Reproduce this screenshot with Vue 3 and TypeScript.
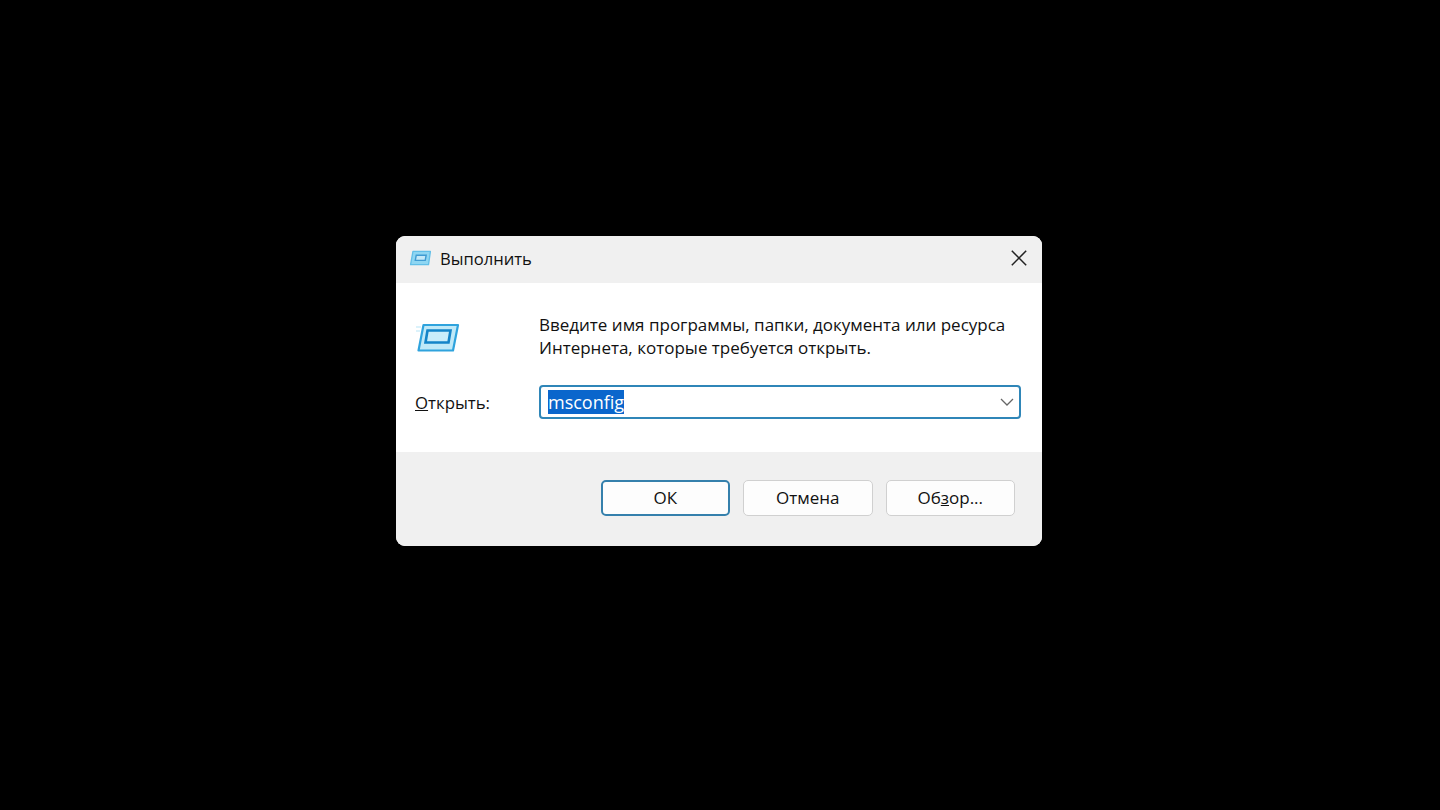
<script setup lang="ts">
const title: string = 'Выполнить'
</script>

<template>
  <div class="page">
    <div class="dialog">
      <header class="titlebar">
        <svg class="icon-small" viewBox="0 0 24 18" width="23" height="17">
          <path d="M4 1.5H22.5L20.5 15.5H1.5Z" fill="#8ed6f2" stroke="#62bfe8" stroke-width="1.4" stroke-linejoin="round" />
          <path d="M7.5 5.5H18L17 11H6.5Z" fill="#c4e9f8" stroke="#3f9bd2" stroke-width="1.5" />
        </svg>
        <span class="title">{{ title }}</span>
        <svg class="close" viewBox="0 0 16 16" width="16" height="16">
          <path d="M.8.8 15.2 15.2M15.2.8.8 15.2" stroke="#222" stroke-width="1.5" fill="none" />
        </svg>
      </header>
      <main class="body">
        <div class="intro">
          <svg class="icon-large" viewBox="0 0 44 30" width="44" height="30">
            <path d="M7.5 2H42L37 27.5H2.5Z" fill="#bfe9f8" stroke="#2fa3dd" stroke-width="2.2" stroke-linejoin="round" />
            <path d="M11.5 7.5H34.5L32.5 19.5H9.5Z" fill="#c9edfa" stroke="#1384c8" stroke-width="2.6" />
            <path d="M0 4H5M0 8H4" stroke="#cfeefa" stroke-width="1.5" />
          </svg>
          <p class="message">Введите имя программы, папки, документа или ресурса<br />Интернета, которые требуется открыть.</p>
        </div>
        <div class="open-row">
          <label class="open-label"><u>О</u>ткрыть:</label>
          <div class="combo">
            <span class="selected">msconfig</span>
            <svg class="chevron" viewBox="0 0 14 8" width="14" height="8">
              <path d="M1 1 7 7 13 1" stroke="#666" stroke-width="1.3" fill="none" />
            </svg>
          </div>
        </div>
      </main>
      <footer class="footer">
        <button class="btn primary">ОК</button>
        <button class="btn">Отмена</button>
        <button class="btn">Об<u>з</u>ор...</button>
      </footer>
    </div>
  </div>
</template>

<style>
html, body { margin: 0; background: #000; }
</style>

<style scoped>
.page {
  width: 1440px;
  height: 810px;
  box-sizing: border-box;
  padding: 236px 0 0 396px;
  background: #000;
  font-family: "Open Sans", "Noto Sans", sans-serif;
  font-size: 17px;
  color: #111;
}
.dialog {
  width: 646px;
  height: 310px;
  border-radius: 9px;
  overflow: hidden;
  display: flex;
  flex-direction: column;
  background: #fff;
}
.titlebar {
  height: 47px;
  flex: none;
  display: flex;
  align-items: center;
  background: #f0f0f0;
  padding: 0 15px 0 13px;
}
.title { margin: -2px 0 0 8px; flex: 1; font-size: 16.6px; }
.icon-small { margin-top: -3px; }
.close { margin-top: -3px; }
.body {
  height: 169px;
  flex: none;
  box-sizing: border-box;
  padding-top: 30px;
  background: #fff;
}
.intro { display: flex; }
.icon-large { margin: 10px 0 0 20px; flex: none; }
.message {
  margin: 0 0 0 79px;
  line-height: 23px;
  white-space: nowrap;
}
.open-row {
  display: flex;
  align-items: center;
  margin-top: 26px;
  padding-left: 19px;
}
.open-label { width: 124px; flex: none; font-size: 16.8px; }
.combo {
  width: 482px;
  height: 34px;
  box-sizing: border-box;
  border: 2px solid #2f86b8;
  border-radius: 4px;
  display: flex;
  align-items: center;
  justify-content: space-between;
  padding: 0 5px 0 7px;
  background: #fff;
}
.selected {
  background: #0a66cc;
  color: #fff;
  font-size: 18px;
  line-height: 24px;
}
.footer {
  flex: 1;
  display: flex;
  justify-content: flex-end;
  align-items: flex-start;
  gap: 13px;
  padding: 28px 27px 0 0;
  background: #f0f0f0;
}
.btn {
  width: 129.5px;
  height: 36px;
  box-sizing: border-box;
  border: 1.5px solid #d0d0d0;
  border-radius: 5px;
  background: #fdfdfd;
  color: #111;
  font: inherit;
  padding: 0 0 2px;
}
.primary {
  border: 2px solid #3580ac;
}
</style>
